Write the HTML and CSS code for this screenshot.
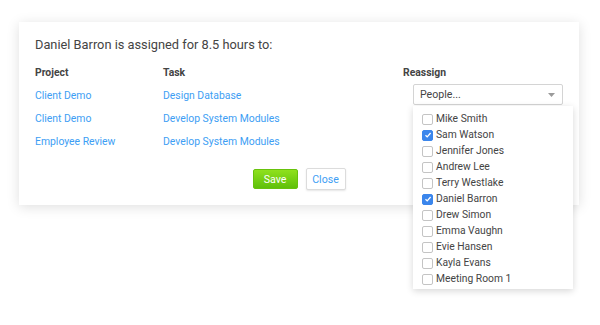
FILE: index.html
```html
<!DOCTYPE html>
<html>
<head>
<meta charset="utf-8">
<link rel="stylesheet" href="styles.css">
</head>
<body>
<div class="card">
  <div class="title">Daniel Barron is assigned for 8.5 hours to:</div>
  <div class="grid">
    <div class="head">Project</div>
    <div class="head">Task</div>
    <div class="head">Reassign</div>

    <a class="link">Client Demo</a>
    <a class="link">Design Database</a>
    <div class="cell">
      <div class="select">
        <span>People...</span>
        <svg class="arrow" width="7" height="4" viewBox="0 0 7 4"><path d="M0 0h7L3.5 4z" fill="#9a9a9a"/></svg>
        <div class="menu">
          <label class="opt"><span class="cb"></span>Mike Smith</label>
          <label class="opt"><span class="cb on"><svg width="8" height="8" viewBox="0 0 8 8"><path d="M1.5 4.2l1.7 1.7L6.6 2" fill="none" stroke="#fff" stroke-width="1.3"/></svg></span>Sam Watson</label>
          <label class="opt"><span class="cb"></span>Jennifer Jones</label>
          <label class="opt"><span class="cb"></span>Andrew Lee</label>
          <label class="opt"><span class="cb"></span>Terry Westlake</label>
          <label class="opt"><span class="cb on"><svg width="8" height="8" viewBox="0 0 8 8"><path d="M1.5 4.2l1.7 1.7L6.6 2" fill="none" stroke="#fff" stroke-width="1.3"/></svg></span>Daniel Barron</label>
          <label class="opt"><span class="cb"></span>Drew Simon</label>
          <label class="opt"><span class="cb"></span>Emma Vaughn</label>
          <label class="opt"><span class="cb"></span>Evie Hansen</label>
          <label class="opt"><span class="cb"></span>Kayla Evans</label>
          <label class="opt"><span class="cb"></span>Meeting Room 1</label>
        </div>
      </div>
    </div>

    <a class="link">Client Demo</a>
    <a class="link">Develop System Modules</a>
    <div class="cell"></div>

    <a class="link">Employee Review</a>
    <a class="link">Develop System Modules</a>
    <div class="cell"></div>
  </div>
  <div class="buttons">
    <button class="btn save">Save</button>
    <button class="btn close">Close</button>
  </div>
</div>
</body>
</html>
```
FILE: styles.css
```css
html, body {
  margin: 0;
  padding: 0;
  background: #fff;
  font-family: Roboto, "Liberation Sans", sans-serif;
  color: #444;
}
html, body {
  height: 325px;
}
.card {
  margin: 22px 0 0 19px;
  width: 560px;
  height: 183px;
  box-sizing: border-box;
  padding: 13px 16px 0 16px;
  background: #fff;
  box-shadow: 0 2px 12px rgba(0, 0, 0, 0.13);
}
.title {
  font-size: 12.8px;
  line-height: 20px;
  color: #444;
}
.grid {
  margin-top: 6px;
  display: grid;
  grid-template-columns: 128px 240px 1fr;
  grid-auto-rows: 23px;
  font-size: 10.4px;
  line-height: 23px;
}
.head {
  font-weight: bold;
  color: #444;
}
.link {
  color: #3d9ef4;
  cursor: pointer;
}
.cell {
  position: relative;
}
.select {
  position: relative;
  margin-left: 10px;
  width: 150px;
  height: 21px;
  box-sizing: border-box;
  border: 1px solid #d4d4d4;
  border-radius: 2px;
  display: flex;
  align-items: center;
  justify-content: space-between;
  padding: 0 7px 0 6px;
  font-size: 10.6px;
  line-height: 19px;
  color: #444;
  background: #fff;
}
.arrow {
  display: block;
}
.menu {
  position: absolute;
  left: -1px;
  top: 21px;
  width: 160px;
  height: 183px;
  box-sizing: border-box;
  padding: 5px 0 0 9px;
  background: #fff;
  box-shadow: 0 2px 7px rgba(0, 0, 0, 0.16);
  z-index: 2;
}
.opt {
  display: flex;
  align-items: center;
  height: 16px;
  line-height: 16px;
  font-size: 10.3px;
  color: #444;
}
.cb {
  width: 9px;
  height: 9px;
  border: 1px solid #c4c4c4;
  border-radius: 2px;
  box-sizing: content-box;
  margin-right: 3px;
  display: flex;
  align-items: center;
  justify-content: center;
  background: #fff;
}
.cb.on {
  background: #3b86ec;
  border-color: #3b86ec;
}
.buttons {
  margin-top: 15px;
  display: flex;
  justify-content: center;
  align-items: center;
  gap: 8px;
}
.btn {
  font-family: Roboto, "Liberation Sans", sans-serif;
  font-size: 10.6px;
  padding: 0;
  cursor: pointer;
}
.save {
  width: 45px;
  height: 20px;
  border: 1px solid #68c20c;
  border-radius: 2px;
  background: linear-gradient(#8fe11d, #5fc00a);
  color: #fff;
}
.close {
  width: 40px;
  height: 22px;
  border: 1px solid #dcdcdc;
  border-radius: 2px;
  background: #fff;
  color: #3d9ef4;
  box-shadow: 0 1px 2px rgba(0, 0, 0, 0.1);
}
```
